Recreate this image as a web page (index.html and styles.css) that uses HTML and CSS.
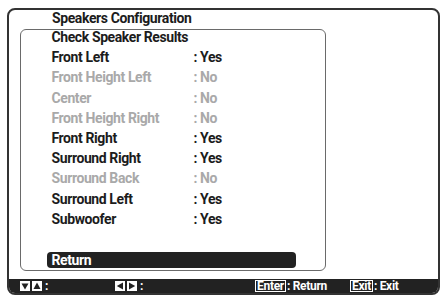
FILE: index.html
```html
<!DOCTYPE html>
<html>
<head>
<meta charset="utf-8">
<link rel="stylesheet" href="styles.css">
</head>
<body>
<div class="screen">
  <div class="title">Speakers Configuration</div>
  <div class="panel">
    <div class="list">
      <div class="row"><span class="label">Check Speaker Results</span></div>
      <div class="row"><span class="label">Front Left</span><span class="val">: Yes</span></div>
      <div class="row off"><span class="label">Front Height Left</span><span class="val">: No</span></div>
      <div class="row off"><span class="label">Center</span><span class="val">: No</span></div>
      <div class="row off"><span class="label">Front Height Right</span><span class="val">: No</span></div>
      <div class="row"><span class="label">Front Right</span><span class="val">: Yes</span></div>
      <div class="row"><span class="label">Surround Right</span><span class="val">: Yes</span></div>
      <div class="row off"><span class="label">Surround Back</span><span class="val">: No</span></div>
      <div class="row"><span class="label">Surround Left</span><span class="val">: Yes</span></div>
      <div class="row"><span class="label">Subwoofer</span><span class="val">: Yes</span></div>
    </div>
    <div class="ret">Return</div>
  </div>
  <div class="footer">
    <div class="grp g1">
      <svg class="key" width="10" height="10" viewBox="0 0 10 10"><rect width="10" height="10" fill="#fff"/><polygon points="1.5,2.5 8.5,2.5 5,8.5" fill="#222"/></svg>
      <svg class="key" width="10" height="10" viewBox="0 0 10 10"><rect width="10" height="10" fill="#fff"/><polygon points="1.5,8 8.5,8 5,1.5" fill="#222"/></svg>
      <span class="colon">:</span>
    </div>
    <div class="grp g2">
      <svg class="key" width="10" height="10" viewBox="0 0 10 10"><rect width="10" height="10" fill="#fff"/><polygon points="8,1.5 8,8.5 1.8,5" fill="#222"/></svg>
      <svg class="key" width="10" height="10" viewBox="0 0 10 10"><rect width="10" height="10" fill="#fff"/><polygon points="2,1.5 2,8.5 8.2,5" fill="#222"/></svg>
      <span class="colon">:</span>
    </div>
    <div class="grp g3"><span class="btn">Enter</span><span class="ftxt">: Return</span></div>
    <div class="grp g4"><span class="btn">Exit</span><span class="ftxt">: Exit</span></div>
  </div>
</div>
</body>
</html>
```
FILE: styles.css
```css
html, body {
  margin: 0;
  padding: 0;
  background: #fff;
}
body {
  font-family: Roboto, "Liberation Sans", sans-serif;
  font-weight: 700;
  color: #1c1c1c;
}
.screen {
  box-sizing: border-box;
  margin: 8px 0 0 7px;
  width: 433px;
  height: 287px;
  border: 2px solid #333;
  border-radius: 8px;
  overflow: hidden;
  display: flex;
  flex-direction: column;
}
.title {
  height: 19px;
  line-height: 16px;
  font-size: 14px;
  padding-left: 43px;
  letter-spacing: -0.4px;
}
.panel {
  box-sizing: border-box;
  margin-left: 11px;
  width: 306px;
  height: 242px;
  border: 1.5px solid #6a6a6a;
  border-radius: 6px;
  display: flex;
  flex-direction: column;
}
.list {
  margin-top: -3px;
  padding-left: 30.5px;
}
.row {
  display: flex;
  height: 20.2px;
  line-height: 20px;
  font-size: 14px;
  letter-spacing: -0.4px;
}
.row.off {
  color: #a9a9a9;
}
.label {
  width: 142px;
}
.ret {
  margin: auto 0 2px 25.5px;
  width: 249px;
  height: 16px;
  line-height: 16px;
  background: #222;
  color: #fff;
  border-radius: 4px;
  font-size: 14px;
  letter-spacing: -0.4px;
  padding-left: 5px;
  box-sizing: border-box;
}
.footer {
  margin-top: auto;
  height: 14px;
  background: #222;
  color: #fff;
  display: flex;
  align-items: center;
  padding-left: 11px;
  font-size: 12px;
  letter-spacing: -0.3px;
}
.grp {
  display: flex;
  align-items: center;
  height: 14px;
}
.g1 { width: 95px; }
.g2 { width: 140px; }
.g3 { width: 95px; }
.key {
  display: block;
  margin-right: 2px;
}
.colon {
  margin-left: 1px;
  line-height: 12px;
}
.btn {
  box-sizing: border-box;
  border: 1px solid #fff;
  height: 12px;
  line-height: 10px;
  padding: 0 1px;
}
.ftxt {
  line-height: 12px;
  margin-left: 1px;
}
```
